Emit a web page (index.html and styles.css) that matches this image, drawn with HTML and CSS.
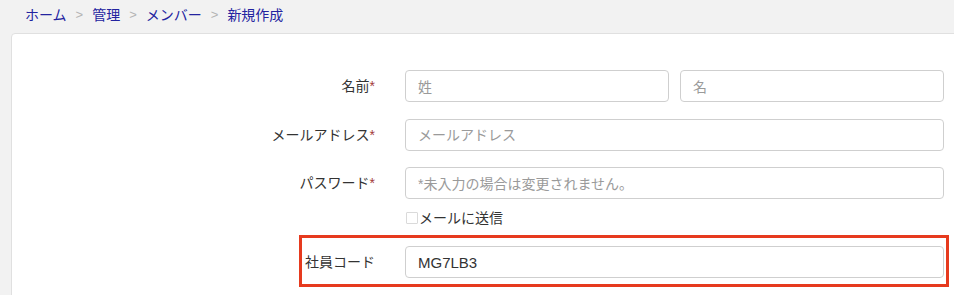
FILE: index.html
```html
<!DOCTYPE html>
<html lang="ja">
<head>
    <meta charset="UTF-8">
    <meta name="viewport" content="width=device-width, initial-scale=1.0">
    <title>メンバー 新規作成</title>
    <link rel="stylesheet" href="styles.css">
</head>
<body>
    <div class="breadcrumb">
        <a href="#">ホーム</a>
        <span class="sep">&gt;</span>
        <a href="#">管理</a>
        <span class="sep">&gt;</span>
        <a href="#">メンバー</a>
        <span class="sep">&gt;</span>
        <a href="#">新規作成</a>
    </div>
    <div class="card">
        <form class="form">
            <div class="row">
                <label class="label">名前<span class="req">*</span></label>
                <div class="field split">
                    <input class="input" type="text" placeholder="姓">
                    <input class="input" type="text" placeholder="名">
                </div>
            </div>
            <div class="row">
                <label class="label">メールアドレス<span class="req">*</span></label>
                <div class="field">
                    <input class="input" type="text" placeholder="メールアドレス">
                </div>
            </div>
            <div class="row tight">
                <label class="label">パスワード<span class="req">*</span></label>
                <div class="field">
                    <input class="input" type="password" placeholder="*未入力の場合は変更されません。">
                </div>
            </div>
            <div class="row check-row">
                <div></div>
                <div class="field check">
                    <span class="box"></span><span>メールに送信</span>
                </div>
            </div>
            <div class="row marked">
                <label class="label">社員コード</label>
                <div class="field">
                    <input class="input" type="text" value="MG7LB3">
                </div>
                <div class="highlight"></div>
            </div>
            <div class="row last">
                <div></div>
                <div class="field">
                    <input class="input" type="text">
                </div>
            </div>
        </form>
    </div>
</body>
</html>
```

FILE: styles.css
```css
body {
    margin: 0;
    background-color: #f2f2f2;
    font-family: "Liberation Sans", "Noto Sans CJK JP", sans-serif;
    font-size: 14px;
    color: #333;
    overflow: hidden;
    height: 295px;
}
.breadcrumb {
    height: 30px;
    padding-left: 25px;
    display: flex;
    align-items: center;
    gap: 8px;
    line-height: 18px;
}
.breadcrumb a {
    color: #2323a0;
    text-decoration: none;
}
.breadcrumb .sep {
    color: #b4b4b4;
    font-size: 13px;
    margin: 0 1px;
}
.card {
    margin: 3px -10px 0 11px;
    padding: 36px 19px 0 0;
    background-color: #fff;
    border: 1px solid #e0e0e0;
    border-radius: 4px;
    height: 260px;
    overflow: hidden;
}
.row {
    position: relative;
    display: grid;
    grid-template-columns: 363px 1fr;
    column-gap: 30px;
    align-items: center;
    margin-bottom: 16.5px;
}
.row.tight {
    margin-bottom: 8px;
}
.row.check-row {
    height: 22px;
    margin-bottom: 17px;
}
.label {
    text-align: right;
    line-height: 20px;
}
.req {
    color: #a33a3a;
}
.field.split {
    display: grid;
    grid-template-columns: 1fr 1fr;
    gap: 11px;
}
.input {
    display: block;
    box-sizing: border-box;
    width: 100%;
    height: 32px;
    padding: 0 12px;
    border: 1px solid #cfcfcf;
    border-radius: 4px;
    background: #fff;
    font-family: inherit;
    font-size: 15px;
    color: #333;
    outline: none;
}
.input::placeholder {
    color: #9a9a9a;
    font-size: 14px;
}
.check {
    display: flex;
    align-items: center;
    padding-left: 1px;
    line-height: 20px;
}
.check .box {
    width: 10px;
    height: 10px;
    border: 1px solid #dadada;
    border-radius: 1px;
    margin-right: 1px;
}
.highlight {
    position: absolute;
    top: -11px;
    bottom: -9px;
    left: 287px;
    right: -5px;
    border: 3px solid #e63a1e;
    pointer-events: none;
}
```
